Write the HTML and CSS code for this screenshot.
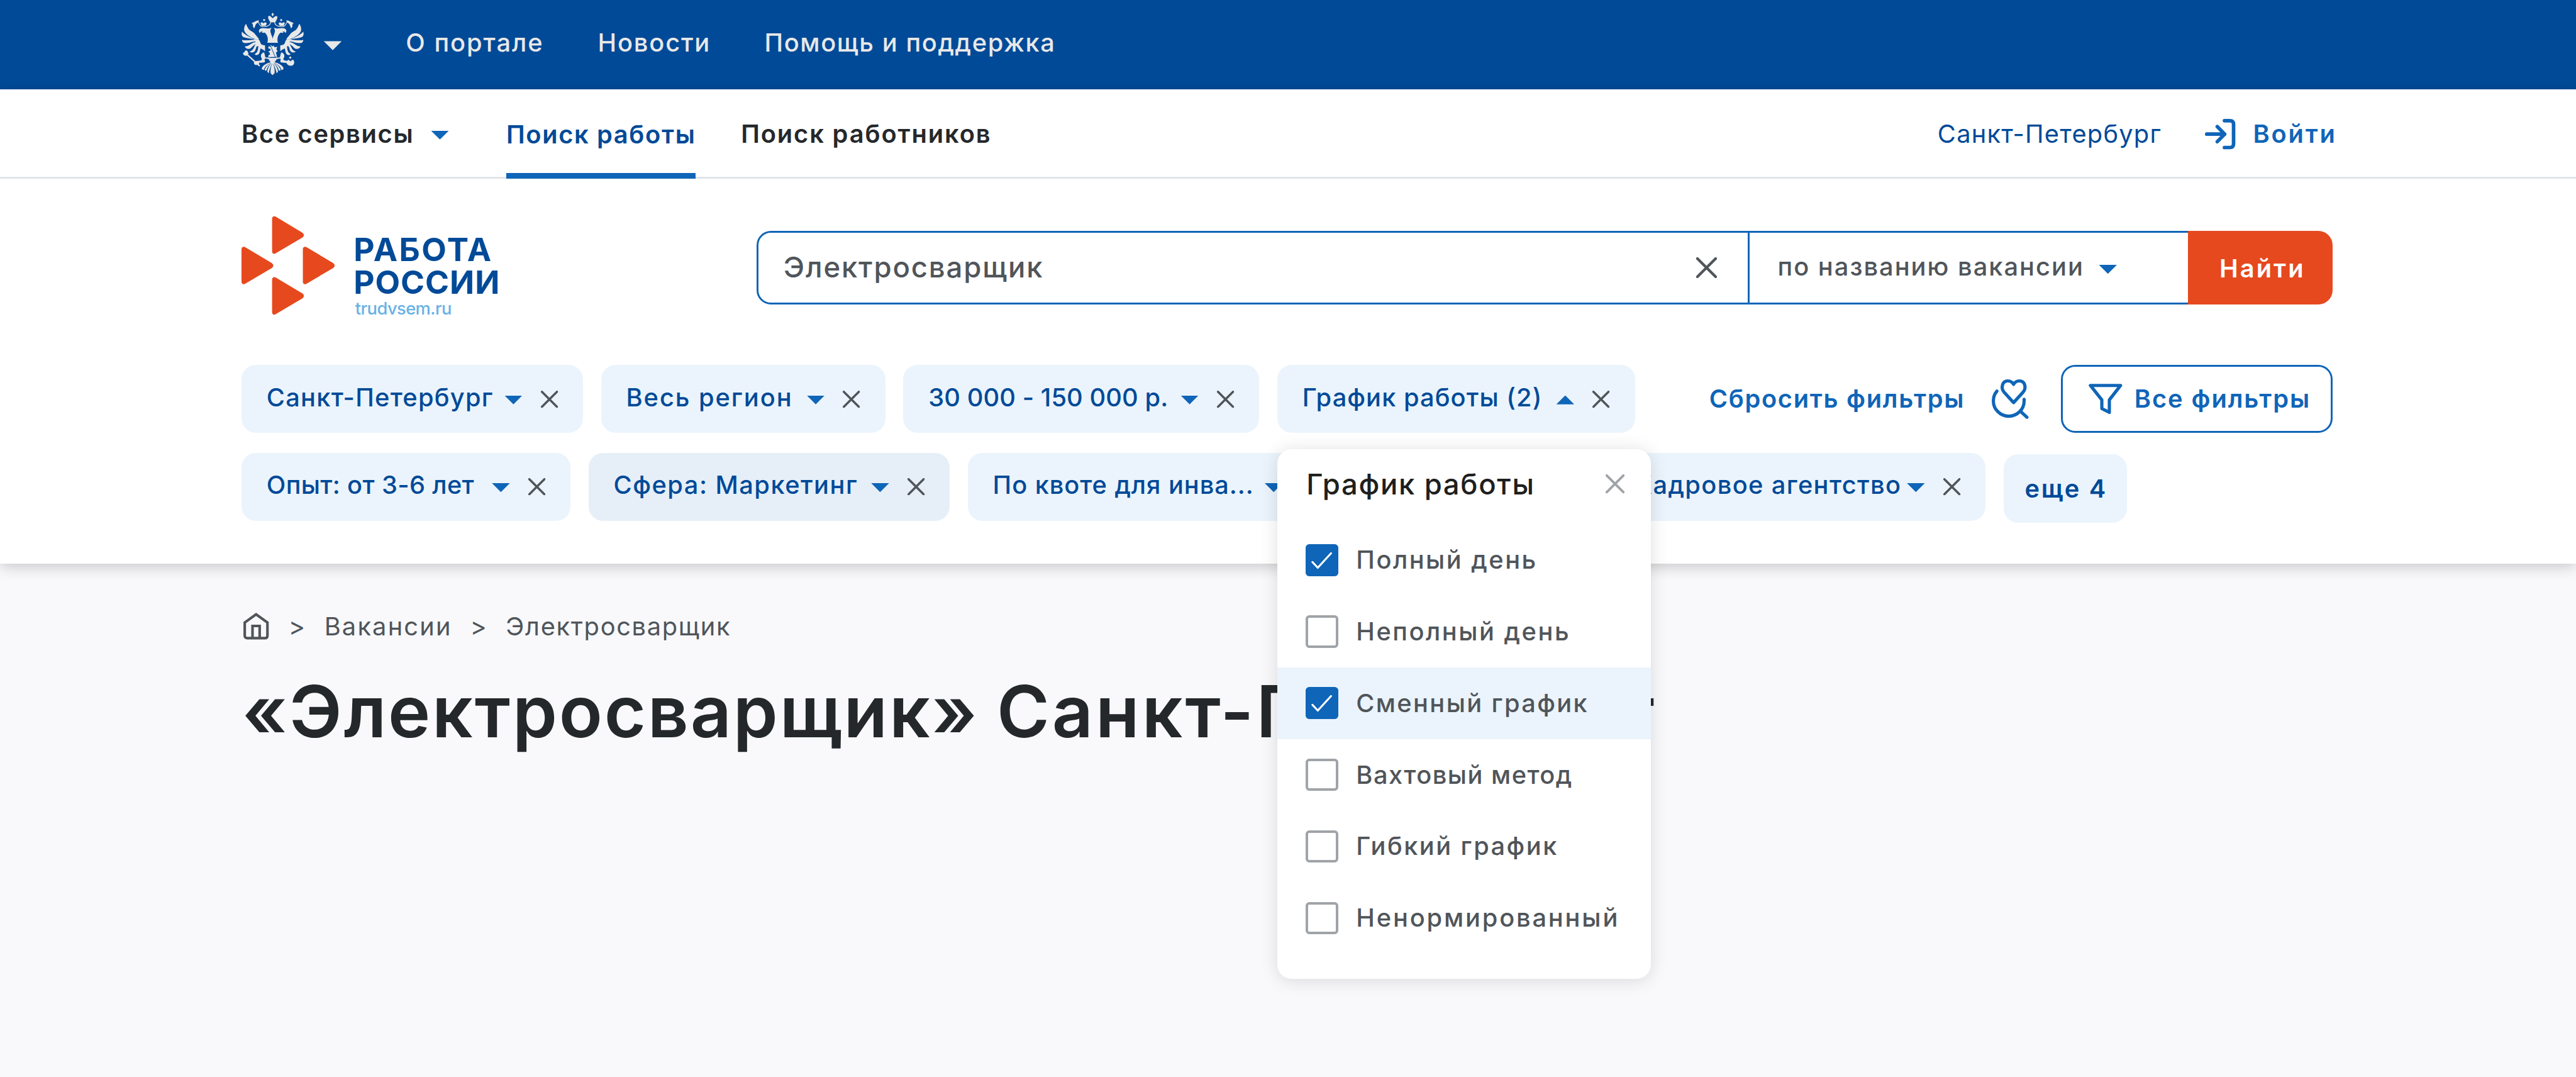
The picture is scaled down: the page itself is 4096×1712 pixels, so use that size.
FILE: index.html
```html
<!DOCTYPE html>
<html lang="ru">
<head>
<meta charset="utf-8">
<title>Работа России</title>
<link rel="stylesheet" href="styles.css">
</head>
<body>
<svg class="defs" aria-hidden="true">
  <symbol id="cross" viewBox="0 0 10 10"><path d="M.6.6 9.4 9.4M9.4.6.6 9.4" fill="none" stroke="currentColor" stroke-width="1.3" stroke-linecap="round"/></symbol>
  <symbol id="tick" viewBox="0 0 18 18"><path d="M3.8 10 6.8 13.2 14.2 5.1" fill="none" stroke="#fff" stroke-width="1.1" stroke-linecap="round" stroke-linejoin="round"/></symbol>
</svg>

<div class="topbar">
  <svg class="emblem" viewBox="30 30 420 420">
    <g id="half">
      <path d="M60 105C50 120 44 140 50 155C60 175 85 192 108 202C120 207 140 214 147 208C145 202 132 190 125 180C112 160 95 157 80 143C70 131 66 118 60 105Z"/>
      <path d="M34 158C28 176 32 190 46 196C70 204 92 202 112 209L150 228L146 210L108 206C90 195 50 180 34 158Z"/>
      <path d="M33 212C34 226 42 234 56 235C80 236 98 226 120 224L160 240L150 215L112 212C85 214 55 220 33 212Z"/>
      <path d="M52 257C56 268 66 275 80 274C97 271 104 252 122 243L150 245L130 228C100 226 85 255 52 257Z"/>
      <path d="M84 292C92 300 104 300 115 293C127 284 124 266 134 256L158 250L132 235C112 250 117 282 84 292Z"/>
      <path d="M118 308C128 318 142 316 149 303C156 290 152 278 160 268L170 255L146 248C138 264 147 294 118 308Z"/>
      <path d="M145 213C149 236 166 250 188 250V290C176 276 160 272 150 266L120 230Z"/>
      <path d="M147 156C146 140 158 133 178 134L205 137C215 137 225 134 232 131C226 140 222 148 224 158C228 180 240 195 241 215V232H203C211 210 206 185 190 168C182 160 172 157 163 157C157 159 155 163 154 168C150 165 148 160 147 156Z"/>
      <path d="M165 161C170 168 180 167 187 163L182 156Z"/>
      <path d="M147 82C130 83 116 95 97 101C105 105 109 112 106 122L115 137L122 120C124 108 130 100 143 96Z"/>
      <path d="M158 102C158 92 170 94 177 102C184 94 198 94 199 103C199 110 192 114 191 119H165C164 112 158 108 158 102Z"/>
      <path d="M182 72L190 80L182 89L173 80Z"/>
      <path d="M226 94C224 112 210 120 196 122C184 125 170 124 160 120C150 114 148 104 144 94" class="emblem-line"/>
      <path d="M182 297C160 301 155 322 166 338C171 347 160 352 146 354V364C160 368 172 366 187 362V350C180 344 192 338 190 328Z"/>
      <path d="M228 362C200 370 172 382 166 404C166 410 172 414 180 415C184 395 200 380 229 366Z"/>
      <path d="M231 366C206 378 191 398 185 414C188 420 193 420 198 418C202 398 214 382 234 368Z"/>
      <path d="M235 367C215 385 205 405 203 427L213 437C217 415 224 390 237 370Z"/>
    </g>
    <use href="#half" transform="translate(478 0) scale(-1 1)"/>
    <path d="M239 30L247 43L239 55L231 43Z"/>
    <path d="M209 64C205 50 220 50 228 58L239 68L251 58C260 50 275 50 270 66C268 80 260 84 257 95H223C220 85 210 80 209 64Z"/>
    <path d="M239 366C230 385 221 410 226 437L238 450L251 437C256 410 247 385 239 366Z"/>
    <path d="M186 330C200 334 212 330 222 334H256C266 330 280 334 292 330V338C280 340 272 340 266 342C262 354 250 360 246 374H231C226 360 216 354 212 342C204 338 192 340 186 338Z"/>
    <path d="M215 254L226 262L222 244L230 250L236 258L246 250L250 262L270 260L264 275L272 290L261 298L269 327L209 329L212 315L222 312L217 296L208 292L225 284L222 274L208 268Z"/>
    <path d="M219 240L258 331" class="emblem-cut"/>
    <path d="M40 300L50 295L55 284L66 284L72 292L77 305L71 316L60 320L50 318L42 311Z"/>
    <path d="M68 312L152 388" class="emblem-rod"/>
    <path d="M113 370C112 358 128 352 148 354V374C138 384 118 386 113 370Z"/>
    <path d="M330 352C334 358 338 352 342 346C348 346 354 352 358 357C363 352 368 347 377 346C388 358 386 377 370 385C352 390 338 382 330 366L310 362Z"/>
    <path d="M357 323L366 332L357 341L348 332Z"/>
  </svg>
  <i class="caret caret-emblem"></i>
  <a class="t-about">О портале</a>
  <a class="t-news">Новости</a>
  <a class="t-help">Помощь и поддержка</a>
</div>

<header class="header">
  <nav class="nav">
    <a class="services">Все сервисы<i class="caret"></i></a>
    <a class="tab">Поиск работы</a>
    <a class="staff">Поиск работников</a>
    <div class="account">
      <a class="city">Санкт-Петербург</a>
      <svg class="login-icon" viewBox="0 0 17 17"><path d="M10.9 1H14Q16 1 16 3V14Q16 16 14 16H10.9M1 8.5H11M6.9 4.3 11 8.5 6.9 12.7" class="line2"/></svg>
      <a class="login">Войти</a>
    </div>
  </nav>

  <div class="brand">
    <svg class="logo-mark" viewBox="0 0 53 55">
      <path id="tri" d="M0 18.4C0 17.1 1.1 16.6 2.1 17.2L17 26.1Q18.6 27.45 17 28.8L2.1 37.6C1.1 38.3 0 37.8 0 36.5Z"/>
      <use href="#tri" x="17.1" y="-17"/>
      <use href="#tri" x="34.3"/>
      <use href="#tri" x="17.1" y="17"/>
    </svg>
    <div class="logo-text">
      <div class="logo-a">РАБОТА</div>
      <div class="logo-b">РОССИИ</div>
      <div class="logo-site">trudvsem.ru</div>
    </div>
    <div class="search">
      <div class="query"><span>Электросварщик</span><svg class="cross-l"><use href="#cross"/></svg></div>
      <div class="scope"><span>по названию вакансии</span><i class="caret"></i></div>
      <button class="find">Найти</button>
    </div>
  </div>

  <div class="filters">
    <div class="row">
      <div class="chip c-city"><span>Санкт-Петербург</span><i class="caret"></i><svg><use href="#cross"/></svg></div>
      <div class="chip c-region"><span>Весь регион</span><i class="caret"></i><svg><use href="#cross"/></svg></div>
      <div class="chip c-pay"><span>30 000 - 150 000 р.</span><i class="caret"></i><svg><use href="#cross"/></svg></div>
      <div class="chip c-schedule"><span>График работы (2)</span><i class="caret up"></i><svg><use href="#cross"/></svg>
        <div class="menu">
          <div class="menu-head"><span>График работы</span><svg class="cross-m"><use href="#cross"/></svg></div>
          <div class="opt o1"><b class="box on"><svg><use href="#tick"/></svg></b><span>Полный день</span></div>
          <div class="opt o2"><b class="box"></b><span>Неполный день</span></div>
          <div class="opt o3 active"><b class="box on"><svg><use href="#tick"/></svg></b><span>Сменный график</span></div>
          <div class="opt o4"><b class="box"></b><span>Вахтовый метод</span></div>
          <div class="opt o5"><b class="box"></b><span>Гибкий график</span></div>
          <div class="opt o6"><b class="box"></b><span>Ненормированный</span></div>
        </div>
      </div>
      <a class="reset">Сбросить фильтры</a>
      <svg class="saved-icon" viewBox="0 0 20.6 22.1"><path d="M12.2 13 7 7.3C4.8 4.8 5.9.9 9 .9C10.8.9 11.6 1.8 12.2 2.8C12.8 1.8 13.6.9 15.4.9C18.6.9 19.6 4.8 17.4 7.3ZM2.9 6.6C1.6 8.1.9 10 .9 12A8.6 8.6 0 0 0 18.1 12V11.2M16.2 18 19.7 21.2" class="line18"/></svg>
      <button class="all"><svg class="funnel" viewBox="0 0 18.9 17"><path d="M1 .95H17.9L11.6 9V16L7.4 13.9V9Z" class="line18"/></svg><span>Все фильтры</span></button>
    </div>
    <div class="row">
      <div class="chip c-exp"><span>Опыт: от 3-6 лет</span><i class="caret"></i><svg><use href="#cross"/></svg></div>
      <div class="chip c-field"><span>Сфера: Маркетинг</span><i class="caret"></i><svg><use href="#cross"/></svg></div>
      <div class="chip c-quota"><span>По квоте для инва...</span><i class="caret"></i><svg><use href="#cross"/></svg></div>
      <div class="chip c-agency"><span>Кадровое агентство</span><i class="caret"></i><svg><use href="#cross"/></svg></div>
      <button class="more">еще 4</button>
    </div>
  </div>
</header>

<main class="main">
  <div class="crumbs">
    <svg class="home" viewBox="0 0 14.2 15"><path d="M.75 5.5 7.1.9 13.45 5.5V12.8Q13.45 14.2 12 14.2H2.2Q.75 14.2.75 12.8ZM5.1 14V7.4H9.1V14" class="line14"/></svg>
    <span class="sep">&gt;</span>
    <a class="crumb-a">Вакансии</a>
    <span class="sep">&gt;</span>
    <a class="crumb-b">Электросварщик</a>
  </div>
  <h1 class="title"><span class="title-a">«Электросварщик»</span> <span class="title-b">Санкт-Петербург</span></h1>
</main>
</body>
</html>
```
FILE: styles.css
```css
/* 1rem equals ten layout units */
html { font-size: 28.4444px; }
* { box-sizing: border-box; }
body {
  margin: 0;
  min-height: 100vh;
  background: #f9f9fb;
  color: #25282b;
  font: 500 1.4rem/1.4 Inter, "Open Sans", sans-serif;
  white-space: nowrap;
}
svg { display: block; flex: none; overflow: visible; }
button { font: inherit; border: 0; padding: 0; margin: 0; text-align: left; white-space: nowrap; }
.defs { position: absolute; width: 0; height: 0; }
.line2, .line18, .line14 { fill: none; stroke: currentColor; stroke-width: 2; stroke-linecap: round; stroke-linejoin: round; }
.line18 { stroke-width: 1.8; }
.line14 { stroke-width: 1.45; stroke-linejoin: miter; stroke-linecap: butt; }

.caret {
  flex: none;
  width: 1rem;
  height: .5rem;
  margin-top: .1rem;
  background: #0f65b8;
  clip-path: polygon(0 0, 100% 0, 50% 100%);
}
.caret.up { clip-path: polygon(50% 0, 100% 100%, 0 100%); }

/* top bar */
.topbar {
  display: flex;
  align-items: center;
  height: 5rem;
  padding-left: 13.5rem;
  background: #004a98;
  color: #e8e8e8;
}
.topbar a { padding-bottom: .2rem; }
.emblem { width: 3.5rem; height: 3.5rem; margin-bottom: .1rem; fill: #e8e8e8; }
.emblem-line { fill: none; stroke: #e8e8e8; stroke-width: 5; }
.emblem-rod { fill: none; stroke: #e8e8e8; stroke-width: 9; }
.emblem-cut { fill: none; stroke: #004a98; stroke-width: 4; }
.caret-emblem { margin-left: 1.1rem; background: #e8e8e8; }
.t-about { margin-left: 3.59rem; letter-spacing: .0489em; }
.t-news { margin-left: 3.02rem; letter-spacing: .0453em; }
.t-help { margin-left: 3rem; letter-spacing: .0399em; }

/* header */
.header {
  position: relative;
  z-index: 1;
  height: 26.5rem;
  background: #fff;
  box-shadow: 0 .2rem .8rem rgba(0, 0, 0, .2);
}
.nav {
  display: flex;
  align-items: center;
  height: 5rem;
  padding: 0 13.6rem 0 13.5rem;
  box-shadow: inset 0 -.1rem #dee2e6;
  font-weight: 600;
}
.services { display: flex; align-items: center; width: 14.8rem; letter-spacing: .0414em; }
.services .caret { margin-left: .95rem; }
.tab {
  display: flex;
  align-items: center;
  width: 10.6rem;
  height: 5rem;
  border: solid #0f65b8;
  border-width: 0 0 .32rem;
  padding-top: .32rem;
  color: #004a98;
  letter-spacing: .0411em;
}
.staff { margin-left: 2.52rem; letter-spacing: .0473em; }
.account { display: flex; align-items: center; width: 22.09rem; margin-left: auto; color: #0f65b8; }
.city { flex: none; width: 14.95rem; color: #004a98; font-weight: 400; letter-spacing: .0308em; }
.login-icon { width: 1.7rem; height: 1.7rem; }
.login { flex: none; margin-left: .99rem; letter-spacing: .0694em; }

.brand { display: flex; height: 10.4rem; padding: 2.09rem 13.6rem 0 13.5rem; }
.logo-mark { width: 5.3rem; height: 5.5rem; fill: #e6491e; }
.logo-text { margin: .91rem 0 0 .97rem; width: 22.53rem; color: #004a98; font-size: 1.81rem; font-weight: 700; line-height: 1.845rem; }
.logo-a { letter-spacing: .0462em; }
.logo-b { letter-spacing: .0173em; }
.logo-site { padding-left: .09rem; color: #68b2e6; font-size: .96rem; font-weight: 500; line-height: 1.1rem; letter-spacing: -.021em; }
.search { display: flex; width: 88.1rem; height: 4.1rem; margin-top: .81rem; color: #50555a; }
.query, .scope { display: flex; align-items: center; border: .11rem solid #0f65b8; }
.query {
  width: 55.5rem;
  padding: 0 1.73rem 0 1.39rem;
  justify-content: space-between;
  border-radius: .8rem 0 0 .8rem;
  font-size: 1.6rem;
  letter-spacing: .0408em;
}
.cross-l { width: 1.16rem; height: 1.16rem; }
.scope { width: 24.5rem; border-width: .11rem 0; padding-left: 1.57rem; letter-spacing: .0502em; }
.scope span { padding-bottom: .08rem; }
.scope .caret { margin: .2rem 0 0 .83rem; }
.find {
  width: 8.1rem;
  padding: .1rem 0 0 1.77rem;
  border-radius: 0 .8rem .8rem 0;
  background: #e6491e;
  color: #fff;
  font-weight: 600;
  letter-spacing: .076em;
}

/* filters */
.filters { display: grid; gap: 1.1rem; padding: 0 13.6rem 0 13.5rem; }
.row { display: flex; align-items: center; height: 3.8rem; }
.chip {
  position: relative;
  display: flex;
  flex: none;
  align-items: center;
  height: 3.8rem;
  margin-right: 1rem;
  padding: 0 1.42rem 0 1.4rem;
  border-radius: .8rem;
  background: #ebf4fc;
  color: #004a98;
}
.chip > span { flex: 1; padding-bottom: .18rem; }
.chip > svg { width: .96rem; height: .96rem; margin-left: 1.02rem; color: #50555a; }
.c-city { width: 19.1rem; letter-spacing: .0312em; }
.c-region { width: 15.9rem; letter-spacing: .0485em; }
.c-pay { width: 19.9rem; letter-spacing: .0017em; }
.c-schedule { width: 20rem; letter-spacing: .0266em; }
.c-exp { width: 18.4rem; letter-spacing: .0083em; }
.c-field { width: 20.2rem; background: #e6eff8; letter-spacing: .0368em; }
.c-quota { width: 21rem; letter-spacing: .0232em; }
.c-agency { width: 21rem; margin-left: 13.9rem; letter-spacing: .0339em; }
.reset { width: 15.79rem; margin-left: auto; color: #0f65b8; font-weight: 600; letter-spacing: .0424em; }
.saved-icon { width: 2.06rem; height: 2.21rem; margin-right: 1.81rem; color: #0f65b8; }
.all {
  display: flex;
  align-items: center;
  width: 15.2rem;
  height: 3.8rem;
  padding-left: 1.46rem;
  border: .11rem solid #0f65b8;
  border-radius: .8rem;
  background: #fff;
  color: #0f65b8;
  font-weight: 600;
  letter-spacing: .0476em;
}
.funnel { width: 1.89rem; height: 1.7rem; margin-right: .66rem; }
.more {
  width: 6.9rem;
  height: 3.8rem;
  margin-top: .2rem;
  padding-left: 1.19rem;
  border-radius: .8rem;
  background: #ebf4fc;
  color: #004a98;
  font-weight: 600;
  letter-spacing: .0686em;
}

/* drop-down list of the schedule filter */
.menu {
  position: absolute;
  z-index: 2;
  top: 4.7rem;
  left: 0;
  width: 20.9rem;
  height: 29.6rem;
  border-radius: .8rem;
  background: #fff;
  color: #50555a;
  box-shadow: 0 .1rem 1rem rgba(0, 0, 0, .13);
}
.menu-head {
  display: flex;
  align-items: center;
  justify-content: space-between;
  height: 4.2rem;
  padding: 0 1.47rem .3rem 1.63rem;
  color: #1f1f1f;
  font-size: 1.6rem;
  letter-spacing: .0362em;
}
.cross-m { width: 1.06rem; height: 1.06rem; color: #a0a4a8; }
.opt { display: flex; align-items: center; gap: 1.01rem; height: 4rem; padding-left: 1.6rem; }
.opt.active { background: #ebf4fc; }
.box { width: 1.8rem; height: 1.8rem; border: .15rem solid #a0a4a8; border-radius: .2rem; background: #fff; }
.box.on { border: 0; background: #0f65b8; }
.box svg { width: 1.8rem; height: 1.8rem; }
.o1 { letter-spacing: .0621em; }
.o2 { letter-spacing: .0626em; }
.o3 { letter-spacing: .0586em; }
.o4 { letter-spacing: .0368em; }
.o5 { letter-spacing: .0613em; }
.o6 { letter-spacing: .0704em; }

/* page content */
.main { padding: 2.5rem 0 0 13.5rem; }
.crumbs { display: flex; align-items: center; height: 2rem; color: #50555a; font-weight: 400; }
.home { width: 1.42rem; height: 1.5rem; margin: 0 1.1rem 0 .11rem; }
.sep { width: 2rem; }
.crumb-a { width: 8.15rem; letter-spacing: .0542em; }
.crumb-b { letter-spacing: .0418em; }
.title { display: flex; gap: 1rem; margin: 1.25rem 0 0 .04rem; font-size: 4rem; font-weight: 600; line-height: 5rem; }
.title-a { letter-spacing: .0245em; }
.title-b { letter-spacing: .0353em; }
```
